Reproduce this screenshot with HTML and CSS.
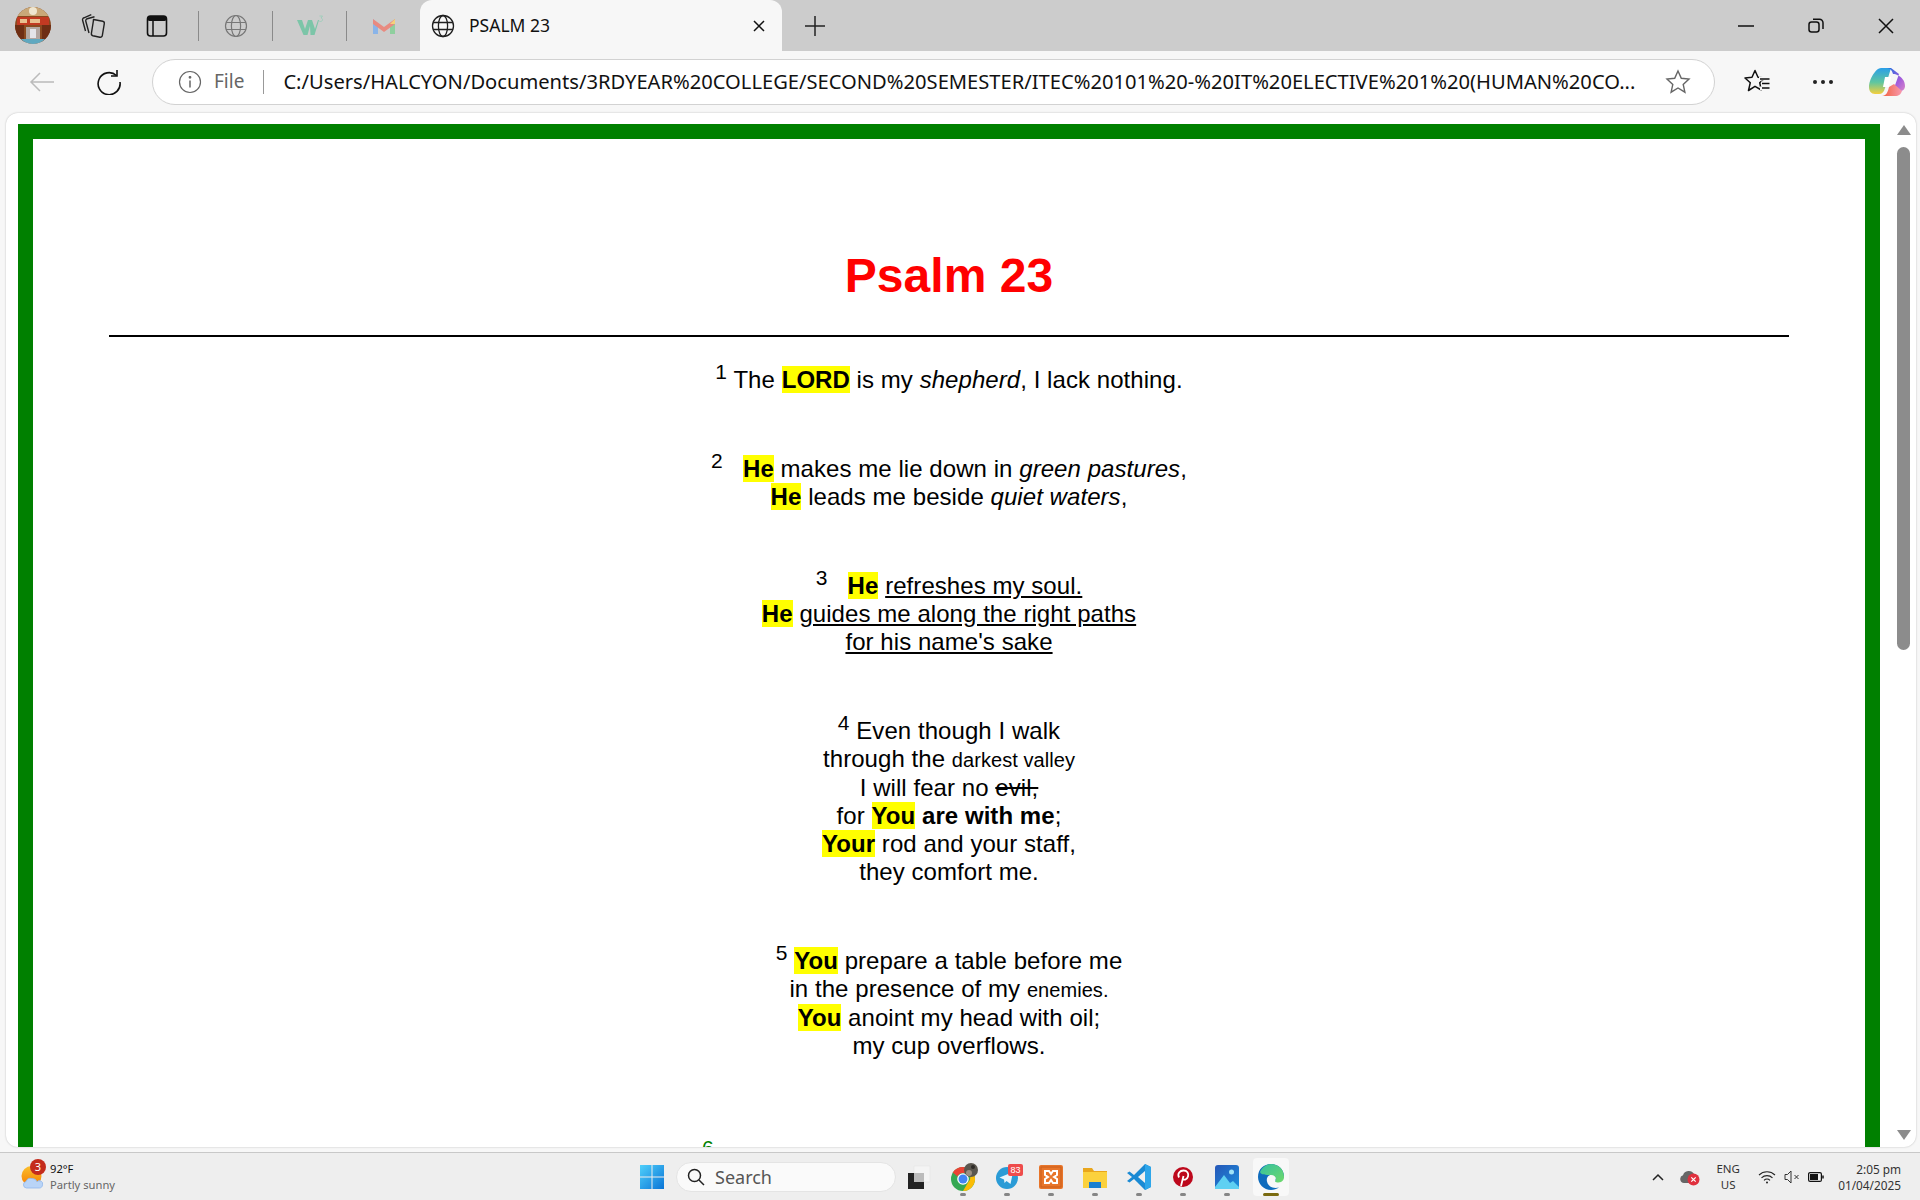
FILE: index.html
```html
<!DOCTYPE html>
<html lang="en">
<head>
    <meta charset="UTF-8">
    <title>PSALM 23</title>
    <link rel="stylesheet" href="styles.css">
</head>
<body>
<div class="tabbar">
    <div class="avatar">
        <svg width="36" height="37" viewBox="0 0 36 37">
            <defs><clipPath id="av"><ellipse cx="18" cy="18.500" rx="18" ry="18.500"/></clipPath></defs>
            <g clip-path="url(#av)">
                <rect width="36" height="37" fill="#8a4a20"/>
                <rect width="36" height="9" fill="#c9a878"/>
                <circle cx="18" cy="4" r="4" fill="#efe6d0"/>
                <rect x="2" y="10" width="32" height="8" fill="#c23a22"/>
                <rect x="5" y="12" width="7" height="4" fill="#e8c090"/>
                <rect x="15" y="12" width="10" height="4" fill="#e8c090"/>
                <rect y="18" width="9" height="19" fill="#6e2e14"/>
                <rect x="27" y="18" width="9" height="19" fill="#6e2e14"/>
                <rect x="11" y="20" width="14" height="17" fill="#b3a6a0"/>
                <path d="M15 22h6v9h-6z" fill="#e4e4e8"/>
                <rect x="0" y="32" width="36" height="5" fill="#5fa8c0"/>
            </g>
        </svg>
    </div>
    <div class="tabtool tool-collections">
        <svg width="26" height="28" viewBox="0 0 26 28" fill="none" stroke="#222" stroke-width="1.400">
            <path d="M12.500 7.500l9.200 1.800a2 2 0 0 1 1.600 2.300l-2 12a2 2 0 0 1-2.400 1.600l-7-1.500a2 2 0 0 1-1.500-2.300l2-12.500a2 2 0 0 1 .100-1.400z"/>
            <path d="M8 21 4.800 9.300a2 2 0 0 1 1.400-2.500l7.300-2"/>
            <path d="M4.500 19 1.600 8.300A2 2 0 0 1 3 5.800L10.300 2.600"/>
        </svg>
    </div>
    <div class="tabtool tool-tabs">
        <svg width="22" height="24" viewBox="0 0 22 24">
            <rect x="1.500" y="2" width="19" height="20" rx="3" fill="none" stroke="#111" stroke-width="1.600"/>
            <rect x="1.500" y="2" width="19" height="5" rx="2" fill="#111"/>
            <path d="M7 7v15" stroke="#111" stroke-width="1.500"/>
        </svg>
    </div>
    <span class="tabsep"></span>
    <div class="pinned">
        <svg class="globe faded" width="24" height="24" viewBox="0 0 24 24" fill="none" stroke="#777" stroke-width="1.200">
            <circle cx="12" cy="12" r="10.500"/><ellipse cx="12" cy="12" rx="4.600" ry="10.500"/>
            <path d="M2 8.500h20M2 15.500h20"/>
        </svg>
    </div>
    <span class="tabsep"></span>
    <div class="pinned">
        <svg width="28" height="22" viewBox="0 0 28 22">
            <path d="M1 5h5l3 9 3-9h4l3 9 3-9h1l-4.500 15h-4L14 11l-2.500 9h-4z" fill="#7cc5a8"/>
            <path d="M23.500 1h3l-1.500 2c1 .2 1.500.9 1.500 1.700 0 1-.8 1.800-1.900 1.800-.7 0-1.300-.3-1.700-.8" fill="none" stroke="#8fcfb4" stroke-width=".7"/>
        </svg>
    </div>
    <span class="tabsep"></span>
    <div class="pinned">
        <svg width="24" height="20" viewBox="0 0 24 20">
            <path d="M1 3v15h5V8z" fill="#8ab4e8"/>
            <path d="M23 3v15h-5V8z" fill="#8fcf9e"/>
            <path d="M1 3l11 8 11-8v5l-11 8L1 8z" fill="#e88a80"/>
            <path d="M18 8l5-5v5z" fill="#f3d27a"/>
        </svg>
    </div>
    <div class="tab">
        <svg class="globe" width="24" height="24" viewBox="0 0 24 24" fill="none" stroke="#1f1f1f" stroke-width="1.300">
            <circle cx="12" cy="12" r="10.500"/><ellipse cx="12" cy="12" rx="4.600" ry="10.500"/>
            <path d="M2 8.500h20M2 15.500h20"/>
        </svg>
        <span class="tab-title">PSALM 23</span>
        <svg class="tab-close" width="14" height="14" viewBox="0 0 14 14" stroke="#111" stroke-width="1.500">
            <path d="M2 2l10 10M12 2 2 12"/>
        </svg>
    </div>
    <div class="newtab">
        <svg width="22" height="22" viewBox="0 0 22 22" stroke="#222" stroke-width="1.500"><path d="M11 1v20M1 11h20"/></svg>
    </div>
    <div class="winbtns">
        <svg width="16" height="16" viewBox="0 0 16 16" stroke="#111" stroke-width="1.500"><path d="M0 8h16"/></svg>
        <svg width="16" height="16" viewBox="0 0 16 16" fill="none" stroke="#111" stroke-width="1.500"><rect x="1" y="4" width="10" height="10" rx="2.500"/><path d="M5 1.200h6.500A3.500 3.500 0 0 1 15 4.700V11"/></svg>
        <svg width="16" height="16" viewBox="0 0 16 16" stroke="#111" stroke-width="1.500"><path d="M1 1l14 14M15 1 1 15"/></svg>
    </div>
</div>

<div class="toolbar">
    <div class="navbtn back">
        <svg width="26" height="22" viewBox="0 0 26 22" fill="none" stroke="#bbb" stroke-width="1.500"><path d="M25 11H2M11 2l-9 9 9 9"/></svg>
    </div>
    <div class="navbtn reload">
        <svg width="26" height="26" viewBox="0 0 26 26" fill="none" stroke="#111" stroke-width="1.600"><path d="M20.500 6.500A11 11 0 1 0 24 13"/><path d="M21 1v6h-6"/></svg>
    </div>
    <div class="addressbar">
        <svg class="info" width="24" height="24" viewBox="0 0 24 24" fill="none" stroke="#666" stroke-width="1.200"><circle cx="12" cy="12" r="10.500"/><path d="M12 10.500v7" stroke-width="1.500"/><circle cx="12" cy="7.300" r=".8" fill="#666"/></svg>
        <span class="file-label">File</span>
        <span class="addr-sep"></span>
        <span class="url">C:/Users/HALCYON/Documents/3RDYEAR%20COLLEGE/SECOND%20SEMESTER/ITEC%20101%20-%20IT%20ELECTIVE%201%20(HUMAN%20CO...</span>
        <svg class="star" width="26" height="26" viewBox="0 0 26 26" fill="none" stroke="#666" stroke-width="1.400"><path d="M13 2l3.300 7.300 7.700.8-5.800 5.300 1.700 7.800L13 19l-6.900 4.200 1.700-7.800L2 10.100l7.700-.8z"/></svg>
    </div>
    <div class="navbtn favs">
        <svg width="26" height="26" viewBox="0 0 26 26" fill="none" stroke="#111" stroke-width="1.500"><path d="M11 1.500l3 6.800 7 .7-5.300 4.700 1.600 7.300-6.300-3.700-6.500 4.200 1.800-7.800L1 9l7-.7z" stroke-linejoin="round"/><path d="M15 9.500h11M17 14.500h9M16 19.500h10" stroke="#f7f7f7" stroke-width="4"/><path d="M16 10h9.500M18 14.500h7.500M18 19h7.500"/></svg>
    </div>
    <div class="navbtn dots"><span></span><span></span><span></span></div>
    <div class="navbtn copilot">
        <svg width="36" height="30" viewBox="0 0 36 30">
            <defs>
                <linearGradient id="cp1" x1="0" y1="0" x2="0" y2="1"><stop offset="0" stop-color="#2a9fe8"/><stop offset=".55" stop-color="#5fc6a0"/><stop offset="1" stop-color="#f5cf3c"/></linearGradient>
                <linearGradient id="cp2" x1="0" y1="0" x2="1" y2="1"><stop offset="0" stop-color="#1b6fe0"/><stop offset=".6" stop-color="#a25bdc"/><stop offset="1" stop-color="#d985c8"/></linearGradient>
                <linearGradient id="cp3" x1="0" y1="0" x2="1" y2="0"><stop offset="0" stop-color="#f2603c"/><stop offset="1" stop-color="#f79ab0"/></linearGradient>
            </defs>
            <path d="M12 1h10l-6 20c-1 4-3 6-6 6H6C2 27 0 24 0 20 0 12 7 1 12 1z" fill="url(#cp1)"/>
            <path d="M18 1c3 0 5 2 6 6 2 0 3 0 4 1 5 2 8 6 8 11 0 3-2 5-5 5h-7l6-17-8-6z" fill="url(#cp2)"/>
            <path d="M13 29h13c4 0 6-2 7-5l-8-7-5 3c-1 5-3 9-7 9z" fill="url(#cp3)"/>
            <path d="M16 10h6l-2 10h-6z" fill="#fff"/>
        </svg>
    </div>
</div>

<div class="viewport">
    <div class="card">
        <div class="page">
            <h1>Psalm 23</h1>
            <hr>
            <p><sup>1</sup> The <mark>LORD</mark> is my <em>shepherd</em>, I lack nothing.</p>
            <p><sup>2</sup>&nbsp;&nbsp; <mark>He</mark> makes me lie down in <em>green pastures</em>,<br><mark>He</mark> leads me beside <em>quiet waters</em>,</p>
            <p><sup>3</sup>&nbsp;&nbsp; <mark>He</mark> <u>refreshes my soul.</u><br><mark>He</mark> <u>guides me along the right paths</u><br><u>for his name's sake</u></p>
            <p><sup>4</sup> Even though I walk<br>through the <small>darkest valley</small><br>I will fear no <s>evil,</s><br>for <mark>You</mark> <strong>are with me</strong>;<br><mark>Your</mark> rod and your staff,<br>they comfort me.</p>
            <p><sup>5</sup> <mark>You</mark> prepare a table before me<br>in the presence of my <small>enemies.</small><br><mark>You</mark> anoint my head with oil;<br>my cup overflows.</p>
            <p class="verse-six"><sup class="green">6</sup></p>
        </div>
        <div class="scrollbar">
            <span class="arrow up"></span>
            <span class="thumb"></span>
            <span class="arrow down"></span>
        </div>
    </div>
</div>

<div class="taskbar">
    <div class="weather">
        <div class="weather-icon">
            <svg width="24" height="30" viewBox="0 0 24 30">
                <defs><linearGradient id="sun" x1="0" y1="0" x2="0" y2="1"><stop offset="0" stop-color="#fbc02d"/><stop offset="1" stop-color="#f57c00"/></linearGradient></defs>
                <circle cx="10.500" cy="14" r="10" fill="url(#sun)"/>
                <path d="M5.500 26a3.300 3.300 0 0 1-.500-6.500 5 5 0 0 1 6-3 5 5 0 0 1 5 3.300 3.200 3.200 0 0 1 5.500 3c0 2-1.500 3.200-3 3.200z" fill="#b9d4f7" stroke="#8fb6ec" stroke-width=".8"/>
            </svg>
            <span class="badge">3</span>
        </div>
        <div class="weather-text">
            <span>92°F</span>
            <span class="muted">Partly sunny</span>
        </div>
    </div>
    <div class="center-icons">
        <svg class="start" width="24" height="24" viewBox="0 0 24 24">
            <defs><linearGradient id="win" x1="0" y1="0" x2="1" y2="1"><stop offset="0" stop-color="#4fd0fb"/><stop offset="1" stop-color="#0a74d6"/></linearGradient></defs>
            <path d="M0 0h11.500v11.500H0zM12.500 0H24v11.500H12.500zM0 12.500h11.500V24H0zM12.500 12.500H24V24H12.500z" fill="url(#win)"/>
        </svg>
        <div class="searchbox">
            <svg width="18" height="18" viewBox="0 0 18 18" fill="none" stroke="#222" stroke-width="1.500"><circle cx="7.500" cy="7.500" r="6"/><path d="M12 12l5 5"/></svg>
            <span>Search</span>
        </div>
        <div class="appicon">
            <svg width="24" height="24" viewBox="0 0 24 24">
                <rect x="7" y="1" width="16" height="16" fill="#f4f4f4" stroke="#e2e2e2" stroke-width=".5"/>
                <rect x="1" y="8" width="16" height="16" fill="#222"/>
                <rect x="7" y="8" width="10" height="9" fill="#bbb"/>
            </svg>
        </div>
        <div class="appicon">
            <svg width="30" height="30" viewBox="-3 0 30 30">
                <circle cx="12" cy="17" r="12" fill="#34a853"/>
                <path d="M12 5a12 12 0 0 1 10.400 6H12a6 6 0 0 0-5.500 3.600L1.800 10.500A12 12 0 0 1 12 5z" fill="#ea4335"/>
                <path d="M22.400 11A12 12 0 0 1 12 29l5-8.500A6 6 0 0 0 17 11z" fill="#fbbc05"/>
                <circle cx="12" cy="17" r="5.800" fill="#fff"/><circle cx="12" cy="17" r="4.500" fill="#4285f4"/>
                <circle cx="20" cy="8" r="7" fill="#5b574f"/><circle cx="18" cy="11" r="3" fill="#9a8f80"/><circle cx="22" cy="5" r="2" fill="#2e2b27"/>
            </svg>
            <i class="pip"></i>
        </div>
        <div class="appicon">
            <svg width="36" height="28" viewBox="-6 0 36 28">
                <circle cx="12" cy="15" r="11" fill="#2a9bd6"/>
                <path d="M4.500 14.500 18 9l-2.500 12-4-3-2 2-.500-3.500z" fill="#e8f4fb"/>
                <rect x="13" y="1" width="15" height="12" rx="2" fill="#ee4b4b"/>
                <text x="20.500" y="10" class="mini-badge">83</text>
            </svg>
            <i class="pip"></i>
        </div>
        <div class="appicon">
            <svg width="24" height="24" viewBox="0 0 24 24">
                <rect width="24" height="24" rx="2" fill="#e8752a"/>
                <rect x="2" y="2" width="20" height="20" fill="none" stroke="#c95f1a" stroke-width="1"/>
                <path d="M6 6h4l2 3 2-3h4v4l-3 2 3 2v4h-4l-2-3-2 3H6v-4l3-2-3-2z" fill="none" stroke="#fff" stroke-width="2"/>
            </svg>
            <i class="pip"></i>
        </div>
        <div class="appicon">
            <svg width="24" height="24" viewBox="0 0 24 24">
                <path d="M0 3h9l2 3h13v3H0z" fill="#e9a61c"/>
                <rect y="7" width="24" height="16" fill="#fbd13d"/>
                <rect x="6" y="17" width="12" height="6" fill="#1a7fd0"/>
            </svg>
            <i class="pip"></i>
        </div>
        <div class="appicon">
            <svg width="24" height="26" viewBox="0 0 24 26">
                <path d="M18 0l6 3v20l-6 3L7 15l-4.500 3.500L0 17l5-4L0 9l2.500-1.500L7 11z" fill="#1a8ad4"/>
                <path d="M18 0l6 3v20l-6 3z" fill="#2ea6ea"/>
                <path d="M18 7v12l-7-6z" fill="#f0f0f0"/>
            </svg>
            <i class="pip"></i>
        </div>
        <div class="appicon">
            <svg width="22" height="22" viewBox="0 0 22 22">
                <circle cx="11" cy="11" r="10" fill="#bd081c"/>
                <path d="M9 20l2.500-10M7 11.500c-2-4 1-7 4.500-7s5.500 2.500 4.500 6-4.500 4-5.500 2" fill="none" stroke="#fff" stroke-width="1.800"/>
            </svg>
            <i class="pip"></i>
        </div>
        <div class="appicon">
            <svg width="24" height="24" viewBox="0 0 24 24">
                <defs><linearGradient id="ph" x1="0" y1="0" x2="1" y2="1"><stop offset="0" stop-color="#2657b8"/><stop offset="1" stop-color="#1b8fdc"/></linearGradient></defs>
                <rect width="24" height="24" rx="3" fill="url(#ph)"/>
                <circle cx="16.500" cy="7" r="2.500" fill="#9ee3f7"/>
                <path d="M0 22 9 10l6 8 3-2 6 6v2H0z" fill="#5fd0f2"/>
            </svg>
            <i class="pip"></i>
        </div>
        <div class="appicon active">
            <svg width="26" height="26" viewBox="0 0 26 26">
                <defs><linearGradient id="ed" x1="0" y1="0" x2="1" y2="1"><stop offset="0" stop-color="#35c1a0"/><stop offset="1" stop-color="#6fd96a"/></linearGradient></defs>
                <path d="M13 0C6 0 0 5 0 13c0 7 6 13 13 13 3 0 5.500-1 8-2.500-6 1.500-11-1-12-6-1-4 2-7 5-7 2 0 4 1 4 3s-1 3-1 3 8 1 9-4C26 5 20 0 13 0z" fill="#0f6cbd"/>
                <path d="M2 8c2-5 7-8 11-8 7 0 13 5 13 13 0 2-1 4-3 5-2 .8-5 .5-6-.500 1-1 1-2 1-2.500 0-2-2-4-5-4-5 0-10 0-11-3z" fill="url(#ed)"/>
            </svg>
            <i class="pip wide"></i>
        </div>
    </div>
    <div class="tray">
        <svg width="14" height="10" viewBox="0 0 14 10" fill="none" stroke="#222" stroke-width="1.500"><path d="M2 8l5-5 5 5"/></svg>
        <div class="tray-cloud">
            <svg width="20" height="18" viewBox="0 0 20 18">
                <path d="M4 15a4 4 0 0 1-1-7.800A6 6 0 0 1 14 6v9z" fill="#666"/>
                <circle cx="13.500" cy="11.500" r="6" fill="#e0303e"/>
                <path d="M11.300 9.300l4.400 4.400M15.700 9.300l-4.400 4.400" stroke="#fff" stroke-width="1.200"/>
            </svg>
        </div>
        <div class="lang"><span>ENG</span><span>US</span></div>
        <div class="tray-status">
            <svg width="18" height="14" viewBox="0 0 18 14" fill="none" stroke="#222" stroke-width="1.100"><path d="M1 5a11.500 11.500 0 0 1 16 0M3.500 7.800a8 8 0 0 1 11 0M6 10.300a4.300 4.300 0 0 1 6 0"/><circle cx="9" cy="12.500" r="1" fill="#222" stroke="none"/></svg>
            <svg width="16" height="14" viewBox="0 0 16 14" fill="none" stroke="#333" stroke-width="1"><path d="M1 4.500h2.500L7 1v12L3.500 9.500H1zM10.500 5l4 4M14.500 5l-4 4"/></svg>
            <svg width="16" height="12" viewBox="0 0 16 12" fill="none" stroke="#111" stroke-width="1.200"><rect x=".6" y="1.600" width="12.800" height="8.800" rx="1.500"/><rect x="2" y="3" width="8" height="6" fill="#111" stroke="none"/><path d="M15 4.500v3" stroke-width="1.500"/></svg>
        </div>
        <div class="clock"><span>2:05 pm</span><span>01/04/2025</span></div>
    </div>
</div>
</body>
</html>
```

FILE: styles.css
```css
:root {
    --chrome: #cccccc;
    --toolbar: #f7f7f7;
    --ui-font: "Noto Sans", "Open Sans", sans-serif;
}

html, body {
    margin: 0;
    height: 100%;
    overflow: hidden;
}

body {
    display: flex;
    flex-direction: column;
    height: 1200px;
    background: var(--toolbar);
    font-family: var(--ui-font);
    color: #111;
}

/* tab strip */
.tabbar {
    display: flex;
    align-items: center;
    flex: 0 0 51px;
    background: var(--chrome);
}

.avatar {
    display: flex;
    margin-left: 15px;
}

.tabtool {
    display: flex;
    justify-content: center;
}

.tool-collections {
    margin-left: 30px;
}

.tool-tabs {
    margin-left: 39px;
}

.tabsep {
    width: 1px;
    height: 30px;
    background: #8a8a8a;
}

.tool-tabs + .tabsep {
    margin-left: 30px;
}

.pinned {
    display: flex;
    justify-content: center;
    width: 73px;
}

.tab {
    display: flex;
    align-items: center;
    align-self: flex-end;
    box-sizing: border-box;
    width: 362px;
    height: 51px;
    padding: 0 16px 0 11px;
    background: var(--toolbar);
    border-radius: 12px 12px 0 0;
}

.tab-title {
    flex: 1;
    margin: -2px 0 0 14px;
    font-size: 17.500px;
}

.newtab {
    display: flex;
    margin-left: 22px;
}

.winbtns {
    display: flex;
    gap: 54px;
    margin-left: auto;
    margin-right: 26px;
}

/* toolbar */
.toolbar {
    display: flex;
    align-items: center;
    flex: 0 0 62px;
    background: var(--toolbar);
}

.navbtn {
    display: flex;
    align-items: center;
    justify-content: center;
}

.back {
    margin-left: 29px;
}

.reload {
    margin-left: 41px;
}

.addressbar {
    display: flex;
    align-items: center;
    box-sizing: border-box;
    width: 1563px;
    height: 46px;
    margin-left: 30px;
    padding: 0 23px 0 25px;
    background: #fff;
    border: 1.500px solid #d2d2d2;
    border-radius: 23px;
}

.file-label {
    margin: -2px 0 0 12px;
    font-size: 19px;
    color: #666;
}

.addr-sep {
    width: 1px;
    height: 24px;
    margin: 0 19px;
    background: #999;
}

.url {
    flex: 1;
    min-width: 0;
    margin-top: -2px;
    white-space: nowrap;
    font-size: 20.150px;
    color: #111;
}

.star {
    flex: none;
    margin-left: 26px;
}

.favs {
    margin-left: 29px;
}

.dots {
    gap: 4px;
    margin-left: 43px;
}

.dots span {
    width: 4px;
    height: 4px;
    background: #222;
    border-radius: 50%;
}

.copilot {
    margin-left: 36px;
}

/* browser viewport */
.viewport {
    flex: 0 0 1039px;
    box-sizing: border-box;
    height: 1039px;
    min-height: 0;
    padding: 0 4px 5px 6px;
}

.card {
    display: flex;
    height: 1034px;
    overflow: hidden;
    background: #fff;
    border-radius: 12px;
    box-shadow: 0 0 2px rgba(0, 0, 0, 0.25);
}

.page {
    flex: 1;
    box-sizing: border-box;
    height: 1600px;
    margin: 11px 0 0 12px;
    padding: 0 76px;
    border: 15px solid #008000;
    font-family: "Liberation Sans", Arial, sans-serif;
    font-size: 24px;
    letter-spacing: 0.06px;
    line-height: 28px;
    color: #000;
    text-align: center;
}

h1 {
    margin: 109px 0 0;
    font-size: 48px;
    line-height: 55px;
    color: #ff0000;
}

hr {
    height: 2px;
    margin: 32px 0 0;
    background: #000;
    border: 0;
}

p {
    margin: 0 0 53px;
}

hr + p {
    margin-top: 21px;
}

/* only the top of this verse number shows above the fold */
.verse-six {
    margin-top: 74px;
    padding-left: 593px;
    text-align: left;
}

sup {
    font-size: 21px;
}

mark {
    background: #ffff00;
    color: #000;
    font-weight: bold;
}

small {
    font-size: 20px;
}

.green {
    color: #008000;
}

.scrollbar {
    display: flex;
    flex-direction: column;
    align-items: center;
    flex: 0 0 36px;
    box-sizing: border-box;
    width: 36px;
    padding: 12px 0 7px 11px;
}

.arrow {
    width: 0;
    height: 0;
    border-left: 7px solid transparent;
    border-right: 7px solid transparent;
}

.up {
    border-bottom: 10px solid #8c8c8c;
}

.down {
    margin-top: auto;
    border-top: 10px solid #8c8c8c;
}

.thumb {
    width: 13px;
    height: 503px;
    margin-top: 12px;
    background: #8c8c8c;
    border-radius: 7px;
}

/* taskbar */
.taskbar {
    display: flex;
    align-items: center;
    flex: 0 0 48px;
    background: #eeeeee;
    border-top: 1px solid #c8c8c8;
    box-sizing: border-box;
    font-size: 12px;
}

.weather {
    display: flex;
    align-items: center;
    gap: 5px;
    margin-left: 21px;
}

.weather-icon {
    position: relative;
    display: flex;
}

.badge {
    position: absolute;
    top: -3px;
    right: -1px;
    width: 16px;
    height: 16px;
    background: #c42b1c;
    border-radius: 50%;
    color: #fff;
    font-size: 11px;
    line-height: 16px;
    text-align: center;
}

.weather-text {
    display: flex;
    flex-direction: column;
    line-height: 16px;
    font-size: 11.200px;
}

.muted {
    color: #666;
}

.center-icons {
    display: flex;
    align-items: center;
    margin-left: 525px;
}

.start {
    margin-right: 12px;
}

.searchbox {
    display: flex;
    align-items: center;
    gap: 10px;
    box-sizing: border-box;
    width: 220px;
    height: 30px;
    padding-left: 10px;
    background: #fafafa;
    border: 1px solid #e4e4e4;
    border-radius: 15px;
    font-size: 18px;
    color: #555;
}

.appicon {
    position: relative;
    display: flex;
    align-items: center;
    justify-content: center;
    width: 44px;
    height: 38px;
}

.searchbox + .appicon {
    margin-left: 1px;
}

.appicon.active {
    width: 36px;
    margin-left: 4px;
    background: #f8f8f8;
    border-radius: 4px;
}

.pip {
    position: absolute;
    bottom: 0;
    left: 50%;
    width: 6px;
    height: 3px;
    margin-left: -3px;
    background: #858585;
    border-radius: 2px;
}

.pip.wide {
    width: 16px;
    margin-left: -8px;
    background: #7a6a10;
}

.mini-badge {
    fill: #fff;
    font-family: "Liberation Sans", sans-serif;
    font-size: 9px;
    text-anchor: middle;
}

.tray {
    display: flex;
    align-items: center;
    margin-left: auto;
    margin-right: 19px;
}

.tray-cloud {
    display: flex;
    margin-left: 15px;
}

.lang {
    display: flex;
    flex-direction: column;
    align-items: center;
    width: 30px;
    margin-left: 13px;
    line-height: 16px;
    font-size: 11.500px;
    color: #333;
}

.tray-status {
    display: flex;
    align-items: center;
    gap: 8px;
    margin-left: 15px;
}

.clock {
    display: flex;
    flex-direction: column;
    align-items: flex-end;
    margin-left: 14px;
    line-height: 16px;
    font-size: 11.800px;
    color: #333;
}
```
